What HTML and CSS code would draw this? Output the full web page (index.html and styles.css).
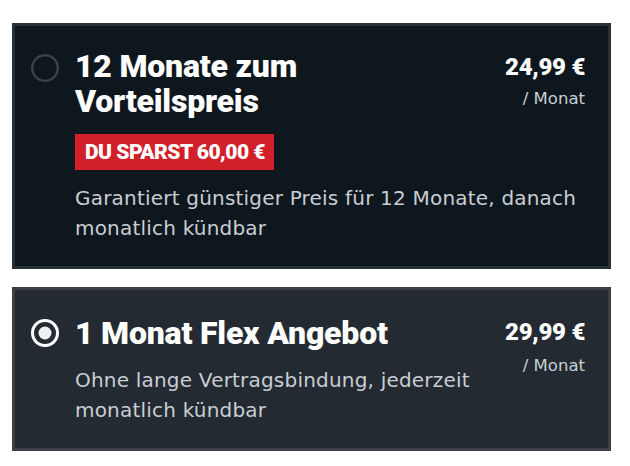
FILE: index.html
```html
<!DOCTYPE html>
<html lang="de">
<head>
<meta charset="utf-8">
<link rel="stylesheet" href="styles.css">
</head>
<body>
<div class="list">
  <div class="card card-dark">
    <div class="radio">
      <svg width="30" height="30" viewBox="0 0 30 30"><circle cx="15" cy="15" r="12.8" fill="none" stroke="#3b4148" stroke-width="2.4"/></svg>
    </div>
    <div class="body">
      <div class="title">12 Monate zum<br>Vorteilspreis</div>
      <div class="price">
        <div class="amount">24,99 €</div>
        <div class="per">/ Monat</div>
      </div>
      <div class="badge-row"><span class="badge">DU SPARST 60,00 €</span></div>
      <div class="desc">Garantiert günstiger Preis für 12 Monate, danach monatlich kündbar</div>
    </div>
  </div>
  <div class="card card-grey">
    <div class="radio">
      <svg width="30" height="30" viewBox="0 0 30 30"><circle cx="15" cy="15" r="12.5" fill="none" stroke="#ffffff" stroke-width="3"/><circle cx="15" cy="15" r="6.5" fill="#eef0f2"/></svg>
    </div>
    <div class="body">
      <div class="title">1 Monat Flex Angebot</div>
      <div class="price">
        <div class="amount">29,99 €</div>
        <div class="per">/ Monat</div>
      </div>
      <div class="desc">Ohne lange Vertragsbindung, jederzeit monatlich kündbar</div>
    </div>
  </div>
</div>
</body>
</html>
```
FILE: styles.css
```css
html, body {
  margin: 0;
  padding: 0;
  background: #ffffff;
}
body {
  font-family: Roboto, "Liberation Sans", sans-serif;
}
.list {
  padding: 23px 19px 0 12px;
  display: flex;
  flex-direction: column;
  gap: 18px;
}
.card {
  display: flex;
  align-items: flex-start;
  border: 3px solid #2a3037;
  padding: 23px 23px 23px 15px;
}
.card-dark {
  background: #0f171e;
  border-color: #283037;
}
.card-grey {
  background: #232a32;
  border-color: #3a4046;
  padding-top: 26px;
  padding-bottom: 23px;
}
.radio {
  width: 30px;
  height: 30px;
  margin-right: 15px;
  margin-top: 4px;
  flex: none;
}
.card-grey .radio {
  margin-top: 2px;
}
.radio svg { display: block; }
.body {
  flex: 1;
  min-width: 0;
  display: grid;
  grid-template-columns: 1fr auto;
  align-items: start;
}
.title {
  grid-column: 1;
  grid-row: 1;
  color: #ffffff;
  font-weight: 900;
  font-size: 32px;
  line-height: 35px;
  letter-spacing: -0.2px;
}
.price {
  grid-column: 2;
  grid-row: 1;
  text-align: right;
  margin-left: 10px;
  padding-top: 4px;
}
.card-grey .price {
  grid-row: 1 / span 2;
  padding-top: 2px;
}
.badge-row {
  grid-column: 1 / -1;
  grid-row: 2;
  margin-top: 15px;
  line-height: 0;
}
.badge {
  display: inline-block;
  background: #d1202a;
  color: #ffffff;
  font-weight: 900;
  font-size: 21px;
  line-height: 36px;
  padding: 0 9px 0 10px;
  letter-spacing: -0.5px;
}
.desc {
  grid-column: 1 / -1;
  grid-row: 3;
  margin-top: 13px;
  color: #c9ced3;
  font-family: "DejaVu Sans", sans-serif;
  font-size: 20px;
  line-height: 30px;
  letter-spacing: 0.2px;
}
.card-grey .desc {
  grid-column: 1;
  grid-row: 2;
  margin-top: 14px;
  max-width: 420px;
}
.amount {
  color: #ffffff;
  font-weight: 900;
  font-size: 24px;
  line-height: 28px;
  letter-spacing: -0.3px;
}
.per {
  color: #c9ced3;
  font-family: "DejaVu Sans", sans-serif;
  font-size: 16.5px;
  line-height: 20px;
  margin-top: 8px;
}
.card-grey .per {
  margin-top: 10px;
}
```
